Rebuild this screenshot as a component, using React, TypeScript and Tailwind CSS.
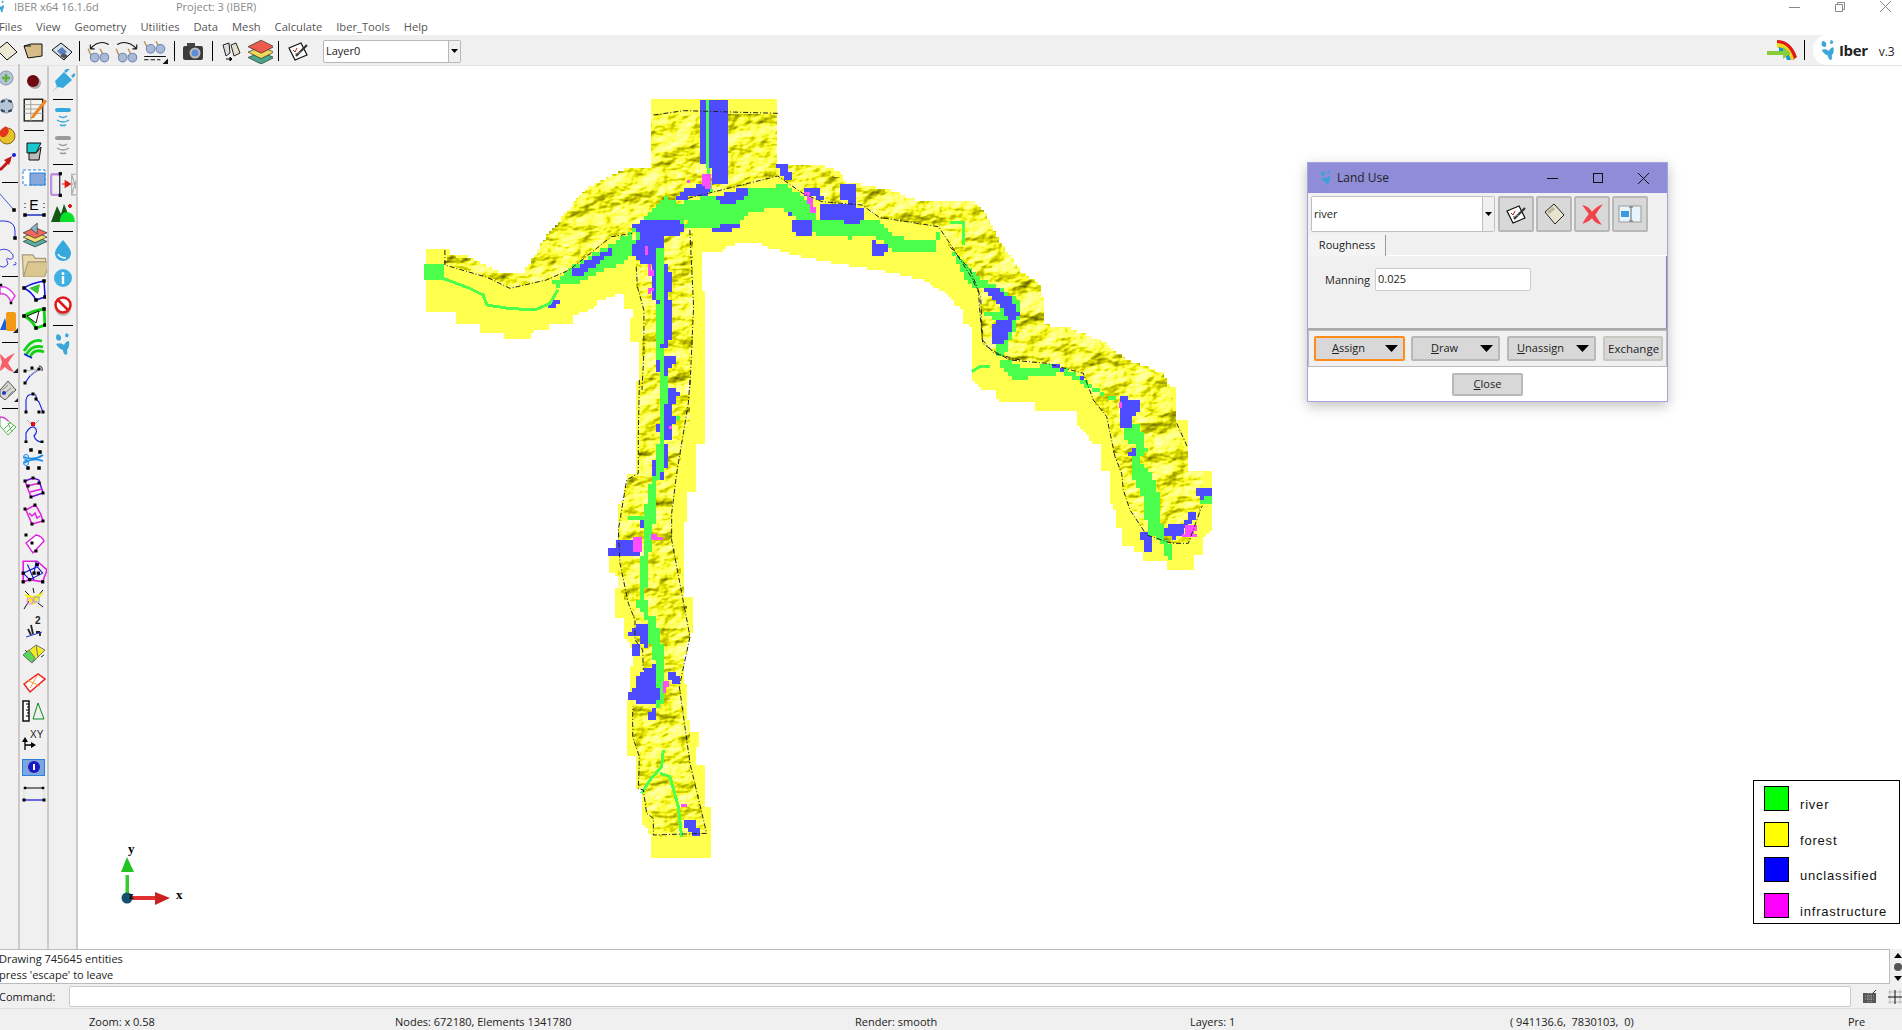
import type { ReactNode } from 'react';

type Pt = number[];

// the zoomed crops I traced from have different scales
const z8 = (p: Pt[]) => p.map(([x, y]) => [420 + x / 2.613, 90 + y / 3]);
const z9 = (p: Pt[]) => p.map(([x, y]) => [600 + x / 3, 380 + y / 3]);
const z10 = (p: Pt[]) => p.map(([x, y]) => [950 + x / 3, 190 + y / 3]);

// turns polygons into blocky raster cells, the map is a raster in the reference
const stairs = (polys: Pt[][], c: number) => {
    let d = '';
    for (const p of polys) {
        const ys = p.map((q) => q[1]);
        const top = Math.floor(Math.min(...ys) / c) * c;
        const bottom = Math.max(...ys);
        for (let y = top; y < bottom; y += c) {
            const yc = y + c / 2;
            const xs: number[] = [];
            p.forEach((a, i) => {
                const b = p[(i + 1) % p.length];
                if (a[1] > yc !== b[1] > yc) {
                    xs.push(a[0] + ((yc - a[1]) / (b[1] - a[1])) * (b[0] - a[0]));
                }
            });
            xs.sort((m, n) => m - n);
            for (let i = 0; i + 1 < xs.length; i += 2) {
                const x0 = Math.round(xs[i] / c) * c;
                const x1 = Math.round(xs[i + 1] / c) * c;
                if (x1 > x0) d += `M${x0} ${y}H${x1}V${y + c}H${x0}Z`;
            }
        }
    }
    return d;
};

const line = (p: Pt[]) => p.map((q) => q.join(',')).join(' ');

const yellow = [
    z8([[15, 475], [78, 475], [78, 495], [130, 500], [205, 545], [270, 548], [330, 440], [430, 300], [540, 232], [605, 232], [605, 30], [935, 30], [935, 222], [1040, 222], [1105, 250], [1105, 272], [1225, 300], [1300, 330], [1445, 335], [1470, 380], [1568, 540], [1568, 900], [1465, 900], [1440, 860], [1440, 710], [1420, 700], [1420, 650], [1360, 600], [1315, 570], [1230, 548], [1095, 522], [990, 498], [900, 470], [885, 460], [800, 465], [790, 490], [735, 490], [735, 525], [745, 665], [745, 900], [570, 900], [570, 760], [545, 755], [555, 660], [530, 660], [530, 610], [470, 630], [450, 655], [400, 680], [400, 705], [335, 705], [335, 720], [290, 725], [290, 750], [220, 750], [220, 725], [160, 725], [160, 700], [95, 700], [95, 670], [15, 670]]),
    z9([[110, 0], [312, 0], [312, 190], [285, 190], [285, 340], [258, 340], [258, 430], [250, 430], [250, 655], [275, 655], [275, 760], [250, 760], [250, 830], [268, 1055], [293, 1055], [293, 1105], [285, 1105], [285, 1155], [312, 1155], [312, 1280], [335, 1280], [335, 1430], [155, 1430], [155, 1375], [130, 1330], [130, 1230], [108, 1225], [110, 1130], [85, 1130], [85, 960], [95, 850], [95, 800], [70, 775], [70, 710], [42, 710], [42, 620], [52, 620], [52, 585], [24, 580], [24, 530], [50, 490], [50, 380], [78, 365], [78, 285], [110, 285]]),
    z10([[0, 35], [70, 35], [70, 60], [100, 60], [140, 140], [205, 240], [235, 260], [270, 285], [285, 360], [285, 405], [350, 412], [460, 455], [530, 510], [590, 530], [640, 550], [660, 590], [680, 590], [680, 690], [710, 690], [710, 840], [790, 845], [790, 1020], [755, 1050], [755, 1095], [730, 1100], [730, 1143], [652, 1143], [652, 1115], [575, 1115], [575, 1090], [548, 1090], [548, 1065], [520, 1065], [520, 1010], [498, 1010], [498, 970], [480, 935], [480, 840], [453, 840], [453, 760], [425, 760], [410, 735], [385, 710], [385, 665], [255, 665], [255, 640], [220, 640], [135, 630], [135, 600], [90, 600], [90, 575], [63, 575], [63, 405], [40, 400], [40, 355], [15, 350], [15, 325], [0, 325]]),
];

const terrain = [
    z8([[68, 495], [130, 505], [205, 548], [270, 550], [330, 440], [430, 300], [540, 232], [605, 232], [605, 70], [935, 70], [935, 222], [1040, 225], [1105, 272], [1225, 305], [1300, 330], [1445, 340], [1568, 545], [1568, 800], [1500, 790], [1470, 750], [1465, 610], [1430, 550], [1380, 460], [1355, 410], [1200, 382], [1155, 345], [1050, 335], [990, 310], [935, 258], [800, 300], [700, 325], [710, 430], [715, 650], [705, 900], [580, 900], [585, 660], [568, 590], [565, 530], [555, 430], [500, 440], [390, 540], [330, 570], [235, 595], [175, 562], [65, 525]]),
    z9([[118, 0], [270, 0], [265, 70], [270, 110], [230, 280], [215, 400], [215, 480], [240, 560], [270, 770], [250, 850], [238, 920], [265, 1050], [270, 1150], [320, 1360], [240, 1370], [160, 1365], [160, 1315], [140, 1300], [130, 1230], [115, 1225], [118, 1130], [98, 1070], [98, 980], [130, 870], [128, 810], [105, 780], [105, 720], [85, 670], [55, 620], [60, 550], [55, 450], [65, 380], [80, 300], [115, 280], [115, 170]]),
    z10([[0, 35], [70, 35], [100, 60], [140, 140], [205, 240], [270, 285], [285, 360], [285, 405], [350, 412], [460, 455], [530, 510], [590, 530], [640, 550], [660, 600], [680, 700], [710, 770], [710, 840], [755, 840], [755, 950], [730, 1010], [715, 1060], [665, 1060], [590, 1035], [575, 1005], [540, 960], [520, 900], [515, 850], [495, 800], [490, 760], [470, 680], [430, 630], [410, 580], [400, 550], [290, 520], [180, 510], [125, 480], [98, 460], [90, 370], [85, 300], [60, 240], [10, 180], [0, 170]]),
];

const green = [
    z8([[700, 330], [850, 300], [870, 295], [960, 285], [1020, 340], [1040, 385], [1110, 390], [1140, 395], [1200, 390], [1235, 440], [1340, 455], [1360, 420], [1345, 490], [1230, 490], [1225, 460], [1180, 440], [1120, 445], [1020, 430], [1000, 400], [965, 375], [940, 350], [850, 375], [830, 405], [750, 410], [705, 420], [680, 340]]),
    z8([[640, 320], [680, 340], [700, 420], [650, 400], [575, 470], [555, 420]]),
    z8([[395, 530], [555, 425], [565, 490], [530, 520], [460, 550], [410, 580], [360, 590], [345, 580]]),
    z8([[15, 525], [60, 525], [65, 565], [15, 565]]),
    z8([[1395, 480], [1420, 510], [1470, 570], [1530, 600], [1568, 640], [1568, 700], [1530, 640], [1470, 600], [1430, 580]]),
    z9([[85, 405], [130, 405], [130, 425], [85, 425]]),
    z9([[50, 430], [70, 430], [70, 438], [50, 438]]),
    z9([[110, 660], [145, 655], [140, 680], [110, 680]]),
    z9([[215, 115], [245, 110], [245, 122], [215, 125]]),
    z10([[10, 190], [60, 240], [130, 290], [180, 330], [200, 400], [160, 500], [140, 490], [130, 460], [170, 410], [150, 390], [95, 375], [150, 360], [140, 320], [90, 290], [50, 270], [25, 230]]),
    z10([[150, 510], [180, 510], [220, 535], [290, 525], [340, 530], [410, 575], [470, 615], [500, 625], [470, 625], [400, 585], [340, 550], [280, 555], [235, 565], [190, 565], [150, 530]]),
    z10([[520, 700], [570, 700], [590, 780], [570, 810], [610, 860], [630, 930], [635, 1000], [640, 1035], [660, 1060], [670, 1110], [650, 1115], [640, 1060], [590, 1030], [585, 930], [540, 850], [545, 810], [555, 770], [520, 740]]),
    z10([[755, 920], [790, 920], [790, 945], [755, 945]]),
];

const blue = [
    z8([[735, 30], [800, 30], [800, 285], [760, 285], [765, 230], [735, 225]]),
    z8([[665, 325], [695, 290], [760, 285], [765, 310], [700, 325]]),
    z8([[800, 305], [860, 292], [855, 320], [815, 345], [770, 330]]),
    z8([[1040, 340], [1165, 350], [1165, 385], [1135, 405], [1090, 390], [1040, 385]]),
    z8([[1095, 280], [1135, 285], [1140, 340], [1095, 330]]),
    z8([[1000, 290], [1040, 300], [1055, 330], [1000, 315]]),
    z8([[930, 225], [960, 225], [975, 270], [950, 268]]),
    z8([[965, 365], [975, 395], [1020, 395], [1020, 440], [990, 440], [970, 410]]),
    z8([[1180, 455], [1225, 460], [1225, 490], [1180, 500]]),
    z8([[755, 410], [830, 405], [840, 415], [770, 430]]),
    z8([[555, 400], [620, 385], [680, 395], [695, 430], [640, 440], [640, 460], [620, 530], [560, 510], [555, 470], [575, 440]]),
    z8([[620, 450], [650, 540], [665, 580], [650, 620], [660, 650], [660, 720], [650, 770], [620, 770], [610, 610], [605, 530]]),
    z8([[395, 540], [470, 490], [505, 470], [500, 490], [465, 520], [415, 560], [395, 560]]),
    z8([[330, 655], [355, 625], [365, 625], [365, 640], [350, 655]]),
    z8([[1465, 590], [1500, 590], [1540, 620], [1568, 680], [1540, 690], [1510, 640]]),
    z8([[1495, 700], [1540, 690], [1520, 760], [1500, 760]]),
    z8([[620, 800], [665, 800], [665, 825], [650, 830], [650, 890], [630, 890], [620, 830]]),
    z9([[190, 20], [240, 35], [225, 60], [215, 100], [225, 120], [210, 175], [195, 175], [165, 150], [190, 110], [185, 70]]),
    z9([[185, 190], [205, 190], [205, 240], [185, 300], [150, 300], [150, 260], [170, 230]]),
    z9([[150, 380], [170, 380], [170, 430], [125, 440], [125, 420], [150, 400]]),
    z9([[55, 480], [125, 475], [120, 525], [60, 530], [25, 530], [25, 505], [50, 503]]),
    z9([[115, 735], [165, 720], [170, 790], [130, 800], [115, 770], [80, 770]]),
    z9([[95, 795], [120, 795], [120, 825], [95, 825]]),
    z9([[115, 880], [185, 845], [190, 940], [180, 970], [85, 965], [90, 930], [110, 925]]),
    z9([[200, 880], [230, 880], [240, 910], [205, 905]]),
    z9([[150, 990], [170, 990], [165, 1015], [145, 1015]]),
    z9([[250, 1315], [285, 1325], [305, 1365], [290, 1370], [250, 1340]]),
    z10([[510, 620], [560, 630], [575, 650], [545, 680], [545, 710], [510, 710], [510, 670]]),
    z10([[140, 315], [170, 335], [190, 365], [185, 410], [165, 450], [140, 455], [130, 430], [135, 395], [170, 390], [175, 350]]),
    z10([[95, 290], [130, 300], [95, 300]]),
    z10([[300, 522], [345, 530], [340, 550]]),
    z10([[380, 550], [415, 575], [385, 565]]),
    z10([[445, 595], [470, 610], [450, 610]]),
    z10([[535, 790], [560, 775], [555, 800], [535, 800]]),
    z10([[735, 895], [788, 895], [788, 920], [750, 925]]),
    z10([[640, 1010], [700, 995], [730, 960], [735, 985], [700, 1030], [665, 1050], [655, 1035], [640, 1035]]),
    z10([[570, 1025], [590, 1030], [610, 1050], [605, 1070], [595, 1090], [575, 1090], [580, 1045], [570, 1045]]),
];

// the river spine sits on top of the blue patches
const spine = [
    z8([[620, 470], [635, 470], [638, 640], [632, 770], [648, 900], [632, 900], [618, 770], [622, 640]]),
    z9([[185, 0], [200, 0], [197, 110], [192, 180], [187, 270], [170, 310], [165, 380], [160, 470], [150, 520], [145, 600], [135, 640], [140, 700], [165, 715], [185, 790], [195, 850], [195, 960], [170, 990], [162, 990], [178, 950], [165, 850], [150, 790], [138, 720], [120, 680], [115, 630], [122, 560], [132, 470], [135, 400], [145, 320], [165, 280], [175, 180], [180, 100]]),
];

const pink = [
    z8([[735, 250], [760, 250], [760, 295], [735, 290]]),
    z8([[695, 270], [705, 270], [705, 278], [695, 278]]),
    z8([[1005, 305], [1020, 310], [1035, 365], [1020, 365]]),
    z8([[585, 470], [595, 470], [595, 495], [585, 495]]),
    z8([[595, 505], [615, 560], [600, 560]]),
    z8([[595, 590], [610, 600], [600, 610]]),
    z9([[100, 475], [130, 465], [125, 515], [100, 515]]),
    z9([[150, 458], [185, 470], [185, 480], [150, 475]]),
    z9([[195, 905], [210, 910], [205, 920], [195, 940], [185, 940], [185, 920]]),
    z9([[240, 1262], [262, 1280], [245, 1285]]),
    z9([[205, 135], [218, 135], [215, 150], [205, 150]]),
    z10([[705, 1005], [745, 1010], [730, 1030], [745, 1045], [700, 1045], [700, 1030]]),
    z10([[510, 635], [520, 635], [520, 655], [510, 650]]),
];

const strands = [
    z8([[60, 565], [130, 595], [165, 615], [175, 645], [230, 655], [300, 660], [340, 640], [360, 600]]),
    z8([[752, 30], [752, 230], [762, 310]]),
    z9([[190, 1110], [185, 1160], [150, 1200], [125, 1240]]),
    z9([[180, 1180], [210, 1190], [235, 1280], [245, 1370]]),
    z10([[0, 98], [40, 98], [40, 165]]),
    z10([[65, 545], [90, 530], [120, 530]]),
];

const bounds = [
    z8([[65, 480], [65, 525], [175, 562], [235, 595], [330, 570], [390, 540], [500, 440], [555, 430]]),
    z8([[610, 75], [690, 62], [935, 70]]),
    z8([[700, 325], [935, 258], [1000, 310], [1050, 335], [1155, 345], [1200, 382], [1355, 410], [1390, 470], [1440, 560], [1465, 620], [1470, 750], [1500, 790], [1568, 810]]),
    z8([[565, 530], [568, 590], [585, 660], [585, 790], [580, 900]]),
    z8([[705, 420], [715, 650], [705, 900]]),
    z9([[270, 0], [265, 70], [230, 280], [215, 400], [215, 480], [270, 770], [238, 920], [270, 1150], [320, 1360], [160, 1365], [160, 1315], [140, 1300], [130, 1230], [115, 1225], [118, 1130], [98, 1070], [98, 980]]),
    z9([[118, 0], [115, 170], [115, 280], [80, 300], [55, 450], [60, 550], [85, 670], [105, 720], [105, 780], [128, 810], [130, 870]]),
    z10([[0, 170], [60, 240], [85, 300], [90, 370], [98, 460], [125, 480], [180, 510], [290, 520], [400, 550], [430, 630], [470, 680], [495, 800], [515, 850], [520, 900], [540, 960], [590, 1035], [665, 1060], [715, 1060], [755, 950]]),
    z10([[680, 700], [712, 770]]),
];

const MapView = () => (
    <svg className="absolute inset-0" width="1824" height="883" viewBox="78 66 1824 883">
        <defs>
            <filter id="hill" filterUnits="userSpaceOnUse" x="400" y="90" width="850" height="790" colorInterpolationFilters="sRGB">
                <feTurbulence type="fractalNoise" baseFrequency="0.03 0.05" numOctaves="4" seed="7" result="n" />
                <feDiffuseLighting in="n" surfaceScale="4.5" diffuseConstant="1" lightingColor="#ffffff" result="l">
                    <feDistantLight azimuth="225" elevation="60" />
                </feDiffuseLighting>
                <feColorMatrix in="l" type="matrix" values="1.5 0 0 0 -0.26 1.5 0 0 0 -0.26 3 0 0 0 -2.3 0 0 0 0 1" result="c" />
                <feComposite in="c" in2="SourceAlpha" operator="in" />
            </filter>
        </defs>
        <g shapeRendering="crispEdges">
            <path d={stairs(yellow, 3)} fill="#ffff4d" />
            <path d={stairs(terrain, 3)} fill="#ffff4d" filter="url(#hill)" />
            <path d={stairs(green, 4)} fill="#4dff4d" />
            <path d={stairs(blue, 4)} fill="#4d4dff" />
            <path d={stairs(spine, 4)} fill="#4dff4d" />
            {strands.map((s, i) => (
                <polyline key={i} points={line(s)} fill="none" stroke="#4dff4d" strokeWidth="3" />
            ))}
            <path d={stairs(pink, 3)} fill="#ff4dff" />
        </g>
        {bounds.map((b, i) => (
            <polyline key={i} points={line(b)} fill="none" stroke="#222" strokeWidth="1" strokeDasharray="5 2 1 2" />
        ))}

        {/* axes */}
        <rect x="125.500" y="875" width="3.500" height="22" fill="#33cc33" />
        <path d="M127 857 L134 872 H121 Z" fill="#22c422" />
        <rect x="130" y="896" width="26" height="4" fill="#e03030" />
        <path d="M155 892 L170 898 L155 905 Z" fill="#c92222" />
        <circle cx="127" cy="898" r="5.500" fill="#15506e" />
        <text x="128" y="853" fontFamily="Liberation Serif" fontWeight="700" fontSize="13" fill="#000">y</text>
        <text x="176" y="899" fontFamily="Liberation Serif" fontWeight="700" fontSize="13" fill="#000">x</text>
        <text x="129" y="899" fontFamily="Liberation Serif" fontWeight="700" fontSize="10" fill="#000">z</text>
    </svg>
);

const I = ({ children, size = 24 }: { children: ReactNode; size?: number }) => (
    <svg width={size} height={size} viewBox="0 0 24 24" className="shrink-0">{children}</svg>
);

const sq = (pts: Pt[], s = 3.500, fill = '#000') =>
    pts.map(([x, y], i) => <rect key={i} x={x - s / 2} y={y - s / 2} width={s} height={s} fill={fill} />);

const Glasses = ({ arc }: { arc?: 'l' | 'r' | 'd' }) => (
    <I size={26}>
        {arc === 'l' && <path d="M4 10 Q12 1 21 6 M4 10 V6 M4 10 H8" fill="none" stroke="#111" strokeWidth="1" />}
        {arc === 'r' && <path d="M3 6 Q12 1 21 10 M21 10 V6 M21 10 H17" fill="none" stroke="#111" strokeWidth="1" />}
        <path d={arc === 'd' ? 'M2 3 L5 9 M13 3 L16 9' : 'M2 10 L5 17 M13 10 L16 16'} fill="none" stroke="#b98a46" strokeWidth="1.200" />
        <circle cx="8" cy={arc === 'd' ? 10 : 18} r="4" fill="#a9b9d8" stroke="#7488b0" />
        <circle cx="17" cy={arc === 'd' ? 10 : 18} r="4" fill="#a9b9d8" stroke="#7488b0" />
        {arc === 'd' && <path d="M2 17 H22 M2 20 H6 M8 20 H12 M14 20 H17" stroke="#111" strokeWidth="1" />}
        {arc === 'd' && <path d="M24 19 V24 H19 Z" fill="#111" />}
    </I>
);

const Check = ({ size = 24 }: { size?: number }) => (
    <I size={size}>
        <path d="M3 9 L15 4 L21 16 L9 21 Z" fill="#fff" stroke="#111" strokeWidth="1.200" />
        <path d="M7 11 L9 13 L11 9" fill="none" stroke="#b02020" strokeWidth="1" />
        <path d="M10 17 L21 6" stroke="#333" strokeWidth="2.200" />
        <path d="M9 15 L15 13" stroke="#888" strokeWidth="1" />
    </I>
);

const Page = () => (
    <I>
        <path d="M3 10 L12 2 L22 13 L13 22 Z" fill="#e8e4d0" stroke="#222" strokeWidth="1" />
        <path d="M6 11 L12 6" stroke="#bdb89e" strokeWidth="3" />
    </I>
);

const RedX = ({ size = 24 }: { size?: number }) => (
    <I size={size}>
        <path d="M3 4 Q8 4 12 10 Q16 5 22 3 Q18 8 15 13 Q18 18 21 22 Q15 21 12 16 Q8 20 3 21 Q6 16 9 12 Q6 8 3 4 Z" fill="#f2424a" />
    </I>
);

const Wave = ({ color }: { color: string }) => (
    <I>
        <path d="M4 5 Q4 3 7 3 H17 Q20 3 20 5 Q20 7 17 7 H7 Q4 7 4 5 Z" fill={color} />
        <path d="M8 11 Q12 14 16 11 M6 15 Q12 19 18 15 M9 20 Q12 21 15 20" fill="none" stroke={color} strokeWidth="1.500" />
    </I>
);

const Logo = ({ color = '#3ba7d8', size = 24 }: { color?: string; size?: number }) => (
    <I size={size}>
        <path d="M6 2 Q11 3 10 7 Q9 10 6 8 Q4 6 6 2 Z M15 1 Q19 2 17 5 Q15 6 14 4 Z M5 12 Q10 10 13 13 Q15 9 18 9 Q19 15 16 18 Q17 22 15 23 Q12 22 12 18 Q8 17 5 12 Z" fill={color} />
    </I>
);

// this column is cut by the window edge, its icons start left of the page
const col1: ReactNode[] = [
    <I><circle cx="6" cy="12" r="7" fill="#b5c5d8" stroke="#8797ad" /><path d="M6 8 V16 M2 12 H10" stroke="#5fae3f" strokeWidth="2.500" /></I>,
    <I><circle cx="6" cy="12" r="7" fill="#b5c5d8" stroke="#8797ad" /><path d="M2 9 V7 H5 M8 7 H11 V9 M11 15 V17 H8 M5 17 H2 V15" fill="none" stroke="#234" strokeWidth="1.300" /></I>,
    <I><circle cx="7" cy="14" r="8" fill="#e6c22c" stroke="#8a6a12" /><path d="M0 9 Q5 3 7 5 Q11 9 6 14 Q2 17 0 13 Z" fill="#e5341c" /></I>,
    <I><path d="M0 20 L10 10" stroke="#c01818" strokeWidth="3" /><path d="M12 6 L4 10 L9 15 Z" fill="#c01818" /><circle cx="14" cy="5" r="2" fill="#1520d8" /></I>,
    'sep12',
    <I><path d="M0 4 L14 20" stroke="#4060d8" strokeWidth="1" />{sq([[14, 20]])}</I>,
    <I><path d="M0 3 H5 Q15 4 15 13 V20" fill="none" stroke="#2030e0" strokeWidth="1" />{sq([[15, 20]])}</I>,
    <I><path d="M0 4 Q8 1 13 9 Q14 14 9 13 Q5 10 8 18 Q4 23 0 20 M15 16 Q18 19 13 19" fill="none" stroke="#4040e8" strokeWidth="1" /></I>,
    'sep8',
    <I><path d="M0 5 Q8 3 15 14 L11 20 Q7 10 0 12 Z" fill="#fff" stroke="#e040e0" strokeWidth="1.500" />{sq([[1, 3], [11, 21]], 2.500)}</I>,
    <I><path d="M0 20 L5 8 L8 20 Z" fill="#1b5de0" /><rect x="6" y="2" width="10" height="19" rx="2" fill="#f59a14" /><path d="M18 18 V23 H13 Z" fill="#222" /></I>,
    'sep12',
    <I><path d="M0 4 Q2 5 5 9 Q10 5 15 3 Q11 8 8 13 Q11 18 14 22 Q8 21 5 17 Q2 20 0 21 Q0 16 2 12 Q0 8 0 4 Z" fill="#f5606a" /><path d="M18 18 V23 H13 Z" fill="#222" /></I>,
    <I><path d="M0 12 L8 3 L16 12 L5 22 L0 18 Z" fill="#d8d8d0" stroke="#555" /><path d="M2 12 L8 7 M5 15 L11 10 M8 18 L13 13" stroke="#888" /><circle cx="4" cy="15" r="2" fill="#1a40c0" /><path d="M19 19 V24 H14 Z" fill="#222" /></I>,
    'sep8',
    <I><path d="M0 4 Q4 2 8 7 L16 13 L8 21 Q2 14 0 12 Z" fill="#fff" stroke="#52b552" strokeWidth="1" /><path d="M0 3 Q5 3 8 7" fill="none" stroke="#e040e0" strokeWidth="1.500" /><path d="M4 15 L11 8 M7 18 L14 11 M8 9 L12 18" stroke="#52b552" strokeWidth="1" /></I>,
];

const poly = (inner: string, outer = '#1010e0') => (
    <I>
        <path d="M2 9 Q10 4 22 2 L23 18 L14 21 Q10 13 2 9 Z" fill="#fff" stroke={outer} strokeWidth="1.500" />
        <path d="M7 9 L18 5 L16 15 Z" fill={inner} />
        {sq([[2, 9], [22, 2], [23, 18], [14, 21]])}
    </I>
);

const col2: ReactNode[] = [
    <I><circle cx="13" cy="14" r="6" fill="#aaa" /><circle cx="11" cy="12" r="6" fill="#6e0a14" /></I>,
    <I size={26}><rect x="3" y="3" width="17" height="20" fill="#f4f4ec" stroke="#222" strokeWidth="1.300" /><path d="M3 8 H20 M3 12 H20 M3 16 H20 M9 3 V23" stroke="#999" strokeWidth=".8" /><path d="M10 18 L22 3 L24 5 L12 20 L9 21 Z" fill="#e8882a" /></I>,
    'sep14',
    <I><path d="M5 4 H19 L14 14 H5 Z" fill="#18c8d0" stroke="#111" /><path d="M7 14 V21 H17 L19 8 L14 14 Z" fill="#bbb" stroke="#111" /></I>,
    <I><rect x="1" y="3" width="22" height="15" fill="#fff" stroke="#2a80e0" strokeDasharray="3 2" /><rect x="8" y="6" width="15" height="12" fill="#88a8dc" stroke="#2a80e0" /></I>,
    <I><path d="M3 20 H22" stroke="#1020c0" strokeWidth="1.400" />{sq([[3, 20], [22, 20]])}<path d="M3 8 V14 M22 8 V14" stroke="#000" strokeDasharray="1 3" /><text x="12" y="15" textAnchor="middle" fontSize="14" fontFamily="Liberation Sans" fill="#000">E</text></I>,
    <I size={26}><path d="M2 18 L13 13 L24 18 L13 23 Z" fill="#5aaea0" stroke="#222" strokeWidth=".6" /><path d="M2 14 L13 9 L24 14 L13 19 Z" fill="#efe070" stroke="#222" strokeWidth=".6" /><path d="M2 10 L13 5 L24 10 L13 15 Z" fill="#f0685c" stroke="#222" strokeWidth=".6" /><path d="M15 11 V1 L9 6 Z" fill="#8ab4c8" stroke="#333" strokeWidth=".6" /></I>,
    <I size={28}><path d="M3 24 L2 5 H11 L13 8 H22 V12 H8 Z" fill="#e9d8a8" stroke="#a89a7a" /><path d="M3 24 L7 11 H26 L21 24 Z" fill="#dcc690" stroke="#a89a7a" /></I>,
    poly('#3cc43c'),
    <I><path d="M2 9 Q10 4 22 2 L23 18 L14 21 Q10 13 2 9 Z" fill="#fff" stroke="#12d012" strokeWidth="2.800" /><path d="M5 9 L17 4 L14 16 Z" fill="#fff" stroke="#111" />{sq([[2, 9], [22, 2], [23, 18], [14, 21]])}</I>,
    <I><path d="M2 16 Q10 3 20 6 M4 20 Q10 9 21 12 M8 22 Q12 13 22 17" fill="none" stroke="#12d012" strokeWidth="2.800" /><path d="M2 19 Q8 22 10 23" fill="none" stroke="#1020e0" strokeWidth="1.500" /></I>,
    <I><path d="M3 20 L8 13 L17 6" fill="none" stroke="#1020e0" strokeWidth="1.200" /><path d="M3 8 L17 6 L8 13" fill="none" stroke="#bbb" />{sq([[3, 20], [3, 8], [17, 6], [10, 5]], 3)}<path d="M17 3 Q21 3 20 8" fill="none" stroke="#111" /></I>,
    <I><path d="M4 21 V9 Q5 3 11 3 Q15 3 14 8 L17 11 L21 21" fill="none" stroke="#1020e0" strokeWidth="1.100" />{sq([[4, 21], [11, 3], [14, 8], [21, 21], [17, 21]], 3)}</I>,
    <I><path d="M4 23 V14 Q8 7 12 8 Q17 12 12 17 Q14 23 20 23" fill="none" stroke="#1020e0" strokeWidth="1.100" />{sq([[4, 23], [20, 23]], 3)}<rect x="9" y="3" width="4" height="4" fill="#e01010" /><path d="M5 1 L9 5 M17 1 L13 5" stroke="#aaa" /></I>,
    <I><path d="M2 10 Q12 14 21 8 M2 16 Q12 10 21 14" fill="none" stroke="#1a8ce8" strokeWidth="1.600" /><circle cx="4" cy="10" r="2.500" fill="none" stroke="#1a8ce8" /><circle cx="4" cy="16" r="2.500" fill="none" stroke="#1a8ce8" />{sq([[9, 3], [18, 5], [6, 21], [17, 21]])}</I>,
    <I><path d="M3 6 L11 3 L17 5 L21 18 L9 22 L6 14 Z" fill="none" stroke="#e020e0" strokeWidth="1.500" /><path d="M3 6 L11 3 L17 5 L21 18 L9 22" fill="none" stroke="#1010e0" strokeWidth=".8" /><path d="M5 11 L18 8 M8 17 L20 14" stroke="#e020e0" strokeWidth="1.500" />{sq([[3, 6], [11, 3], [17, 8], [21, 18], [9, 22], [6, 11]], 3)}</I>,
    <I><path d="M4 7 L13 2 Q19 9 21 18 L10 21 Z" fill="none" stroke="#e020e0" strokeWidth="1.500" /><path d="M7 10 L10 13 L13 10 L15 15 L18 13" fill="none" stroke="#e020e0" strokeWidth="1.500" />{sq([[3, 6], [13, 2], [21, 18], [10, 21]], 3)}</I>,
    <I><path d="M4 12 L14 4 Q20 5 22 10 L11 22 Z" fill="#fff" stroke="#e020e0" strokeWidth="1.400" />{sq([[4, 4], [10, 12], [14, 20]], 3)}</I>,
    <I size={26}><path d="M2 3 L15 3 L24 11 L20 22 L8 20 L2 22 Z" fill="none" stroke="#e020e0" strokeWidth="1.500" /><path d="M2 14 L15 8 L20 14 L8 20 Z M6 6 L12 20 M14 3 L12 14" fill="none" stroke="#1010d0" strokeWidth="1" />{sq([[2, 22], [12, 14], [15, 6], [20, 22], [8, 20], [16, 14], [2, 14]], 3)}</I>,
    <I><path d="M3 4 L8 9 M21 3 L16 9 M2 22 L7 14 M21 20 L16 16 M11 1 L12 6" stroke="#111" /><path d="M2 7 L12 9 L22 5 L17 12 L12 18 L7 14 Z" fill="#f6f01e" /><circle cx="8" cy="14" r="3" fill="none" stroke="#f08ae0" strokeWidth="1.200" /><rect x="12" y="10" width="5" height="5" fill="none" stroke="#9a9ae0" /></I>,
    <I><path d="M6 14 L9 20 M9 10 L11 19 M18 17 V21 M14 17 L18 17" stroke="#222" strokeWidth="1.800" /><path d="M4 22 L20 17" stroke="#2030d0" /><text x="13" y="9" fontSize="10" fontWeight="700" fontFamily="Liberation Sans" fill="#222">2</text></I>,
    <I><path d="M1 12 L14 2 L23 7 L10 20 Z" fill="#f4ec20" stroke="#777" /><path d="M1 12 L7 7 L13 15 L10 20 Z" fill="#58d858" stroke="#777" /><path d="M14 2 L16 14" stroke="#777" /><path d="M3 7 L5 9 M22 12 L19 14" stroke="#333" /></I>,
    <I><path d="M2 13 L16 3 L23 8 L8 21 Z" fill="#fff" stroke="#f02020" strokeWidth="1.500" /><path d="M5 9 L18 15 M15 5 L8 17" stroke="#f0a030" strokeWidth="1" /></I>,
    <I><rect x="1" y="2" width="6" height="20" fill="#fff" stroke="#000" strokeWidth="1.400" /><path d="M4 5 H7 M5 8 H7 M4 11 H7 M5 14 H7 M4 17 H7" stroke="#000" /><path d="M16 4 L11 20 H22 Z" fill="none" stroke="#0a8a1a" strokeWidth="1" /></I>,
    <I><path d="M3 23 V13 M3 18 H11" stroke="#000" strokeWidth="1.300" /><path d="M3 10 L0 15 H6 Z M14 18 L9 15 V21 Z" fill="#000" /><text x="8" y="11" fontSize="10" fontFamily="Liberation Sans" fill="#222">XY</text></I>,
    <div className="w-[23px] h-[17px] bg-[#7da6e0] border border-[#2a80e0] flex items-center justify-center"><div className="w-[12px] h-[12px] rounded-full bg-[#1a1ac0] flex items-center justify-center"><div className="w-[2px] h-[6px] bg-white" /></div></div>,
    <I><path d="M3 5 H21" stroke="#000" />{sq([[3, 5], [21, 5]], 2.500)}<path d="M2 6 V16 M22 6 V16" stroke="#a0e0a0" strokeDasharray="1 1" /><path d="M2 17 H22" stroke="#1010e0" strokeWidth="1.200" />{sq([[2, 17], [22, 17]], 3)}</I>,
];

const col3: ReactNode[] = [
    <I><path d="M1 23 L6 18 L4 12 L13 3 L21 11 L12 19 L7 18" fill="#35a8de" /><path d="M14 3 L18 -1 M21 8 L24 5" stroke="#35a8de" strokeWidth="2.500" /></I>,
    'sep8',
    <Wave color="#35a8de" />,
    <Wave color="#9a9a9a" />,
    'sep11',
    <I size={26}><path d="M1 3 H10 M1 22 H10 M1 3 V22" fill="none" stroke="#c090e0" strokeWidth="2.200" /><path d="M9 3 V22" stroke="#111" /><rect x="8" y="1" width="3" height="3" fill="#000" /><rect x="8" y="21" width="3" height="3" fill="#000" /><path d="M11 12 H14 M14 9 L19 12 L14 15 Z" fill="#e01818" stroke="#e01818" /><path d="M20 3 H26 V22 H20 Z M20 3 L26 22 M26 3 L20 22 M20 12 H26" fill="none" stroke="#aaa" /></I>,
    <I><path d="M0 22 L6 6 L10 14 L13 4 L18 16 L18 22 Z" fill="#165a16" /><path d="M9 22 Q9 12 16 12 Q23 12 24 22 Z" fill="#0ae02a" /><path d="M19 4 V8 M17 6 H21" stroke="#e01818" strokeWidth="2" /></I>,
    'sep10',
    <I><path d="M12 2 Q20 11 20 15 A8 8 0 0 1 4 15 Q4 11 12 2 Z" fill="#35a8de" /><path d="M7 16 Q9 20 15 20" fill="none" stroke="#fff" strokeWidth="1.500" /></I>,
    <I><circle cx="12" cy="12" r="9" fill="#3fb0e2" /><circle cx="12" cy="7.500" r="1.500" fill="#fff" /><rect x="10.800" y="10" width="2.400" height="8" fill="#fff" /></I>,
    <I><circle cx="12" cy="14" r="8" fill="#bbb" /><circle cx="12" cy="11" r="7.500" fill="#fff" stroke="#e01818" strokeWidth="2.500" /><path d="M7 6 L17 16" stroke="#e01818" strokeWidth="2.500" /></I>,
    'sep10',
    <Logo />,
];

const sepClass: Record<string, string> = {
    sep8: 'h-[8px]',
    sep10: 'h-[10px]',
    sep11: 'h-[11px]',
    sep12: 'h-[12px]',
    sep14: 'h-[14px]',
};

const ToolColumn = ({ items, className }: { items: ReactNode[]; className: string }) => (
    <div className={`flex flex-col items-center overflow-hidden border-r-2 border-[#cfc8c8] ${className}`}>
        {items.map((item, i) =>
            typeof item === 'string' ? (
                <div key={i} className={`w-[20px] shrink-0 flex items-center ${sepClass[item]}`}>
                    <div className="w-full h-px bg-black" />
                </div>
            ) : (
                <div key={i} className="h-[28px] w-[28px] shrink-0 flex items-center justify-center">
                    {item}
                </div>
            ),
        )}
    </div>
);

const VSep = ({ className }: { className: string }) => <div className={`w-px h-[20px] bg-black shrink-0 ${className}`} />;

const Toolbar = () => (
    <div className="h-[31px] bg-[#f0f0f0] flex items-center shrink-0 border-b border-[#e4e4e4]">
        <div className="flex items-center pl-0 -ml-[5px] translate-y-px">
            <I><path d="M2 11 L12 3 L22 13 L12 21 Z" fill="#ece8d4" stroke="#111" /></I>
            <div className="ml-[2px]"><I><path d="M3 7 L10 5 L21 5 L21 17 L7 19 Z" fill="#d8bc88" stroke="#111" /><path d="M3 7 L10 7" stroke="#111" /></I></div>
            <div className="ml-[5px]"><I><path d="M2 11 L11 4 L22 13 L14 21 Z" fill="#d8e0ec" stroke="#111" /><path d="M7 12 L12 8 L17 13 L12 17 Z" fill="#5a80c0" /><path d="M10 17 L14 14 L18 17 L15 20 Z" fill="#555" /></I></div>
            <VSep className="ml-[5px]" />
            <div className="ml-[6px]"><Glasses arc="l" /></div>
            <div className="ml-[2px]"><Glasses arc="r" /></div>
            <div className="ml-[2px]"><Glasses arc="d" /></div>
            <VSep className="ml-[6px]" />
            <div className="ml-[6px]"><I><rect x="2" y="7" width="20" height="14" rx="2" fill="#3c3c3c" /><rect x="6" y="4" width="8" height="4" fill="#444" /><circle cx="14" cy="14" r="5.500" fill="#bbb" /><circle cx="14" cy="14" r="3.500" fill="#5a90d8" /></I></div>
            <VSep className="ml-[7px]" />
            <div className="ml-[6px]"><I><path d="M4 6 L10 4 L11 14 L7 17 Z" fill="#ddd" stroke="#222" /><path d="M12 6 L17 4 L21 14 L15 17 Z" fill="#e4e0cc" stroke="#222" /><path d="M7 20 H11 M11 18 L13 20 L11 22 Z" fill="#000" stroke="#000" /></I></div>
            <div className="ml-[4px]"><I size={26}><path d="M1 18 L13 13 L25 18 L13 24 Z" fill="#4aa88a" stroke="#222" strokeWidth=".6" /><path d="M1 13 L13 8 L25 13 L13 19 Z" fill="#f0d858" stroke="#222" strokeWidth=".6" /><path d="M1 8 L13 2 L25 8 L13 14 Z" fill="#ee5a4c" stroke="#222" strokeWidth=".6" /></I></div>
            <VSep className="ml-[5px]" />
            <div className="ml-[7px]"><Check /></div>
        </div>
        <div className="ml-[13px] w-[138px] h-[23px] bg-white border border-[#b8b8b8] rounded-[2px] flex items-center translate-y-px">
            <span className="flex-1 pl-[2px]">Layer0</span>
            <div className="w-[12px] h-full bg-[#f0f0f0] border-l border-[#b8b8b8] flex items-center justify-center">
                <svg width="7" height="4" viewBox="0 0 7 4"><path d="M0 0 H7 L3.500 4 Z" fill="#000" /></svg>
            </div>
        </div>
        <div className="ml-auto flex items-center h-full">
            <svg width="32" height="22" viewBox="0 0 32 22">
                <path d="M10 1 Q24 1 30 18 L26 21 Q22 7 10 7 Z" fill="#e01818" />
                <path d="M10 4 Q22 4 27 20 L24 21 Q20 9 10 9 Z" fill="#f0d818" />
                <path d="M12 8 Q20 9 24 21 L20 21 Q18 13 12 12 Z" fill="#1890e0" />
                <path d="M0 12 H16 V8 L24 14 L16 20 V16 H0 Z" fill="#88cc38" />
            </svg>
            <div className="w-px h-[20px] bg-black ml-[5px]" />
            <div className="ml-[8px] w-[89px] h-full bg-white rounded-l-[14px] flex items-center pl-[4px]">
                <Logo size={22} />
                <span className="pt-[1px] text-[15px] font-bold tracking-tight font-['Open_Sans'] text-[#222]">Iber</span>
                <span className="ml-[11px] pt-[3px] text-[12px] text-[#222]">v.3</span>
            </div>
        </div>
    </div>
);

const DlgIcon = ({ children }: { children: ReactNode }) => (
    <div className="w-[36px] h-[36px] bg-[#d8d8d8] border-2 border-[#b8b8b8] rounded-[2px] flex items-center justify-center">{children}</div>
);

const Arrow = () => (
    <svg width="13" height="7" viewBox="0 0 13 7"><path d="M0 0 H13 L6.500 7 Z" fill="#000" /></svg>
);

const ArrowButton = ({ u, rest, className }: { u: string; rest: string; className: string }) => (
    <div className={`h-[25px] bg-[#d8d8d8] rounded-[2px] flex items-center pr-[5px] ${className}`}>
        <span className="flex-1 text-center pr-[4px]"><u>{u}</u>{rest}</span>
        <Arrow />
    </div>
);

const LandUse = () => (
    <div className="absolute left-[1229px] top-[96px] w-[361px] h-[240px] border border-[#a5a3dc] bg-white shadow-[0_4px_12px_rgba(0,0,0,0.25)] flex flex-col">
        <div className="h-[30px] bg-[#8f8dd8] flex items-center pl-[10px]">
            <Logo color="#3a9fd8" size={16} />
            <span className="ml-[3px] text-[12px] text-[#222]">Land Use</span>
            <div className="ml-auto flex items-center">
                <svg width="11" height="11" viewBox="0 0 11 11"><path d="M0 5.500 H11" stroke="#111" /></svg>
                <svg className="ml-[35px]" width="10" height="10" viewBox="0 0 10 10"><rect x=".5" y=".5" width="9" height="9" fill="none" stroke="#111" /></svg>
                <svg className="ml-[35px] mr-[18px]" width="11" height="11" viewBox="0 0 11 11"><path d="M0 0 L11 11 M11 0 L0 11" stroke="#111" /></svg>
            </div>
        </div>
        <div className="bg-[#f0f0f0] flex items-center gap-[2px] pt-[3px] pl-[3px]">
            <div className="w-[184px] h-[36px] bg-white border border-[#c0c0c0] rounded-[2px] flex items-center mr-[1px]">
                <span className="flex-1 pl-[2px]">river</span>
                <div className="w-[12px] h-full bg-[#f0f0f0] border-l border-[#c0c0c0] flex items-center justify-center">
                    <svg width="7" height="4" viewBox="0 0 7 4"><path d="M0 0 H7 L3.500 4 Z" fill="#000" /></svg>
                </div>
            </div>
            <DlgIcon><Check /></DlgIcon>
            <DlgIcon><Page /></DlgIcon>
            <DlgIcon><RedX size={26} /></DlgIcon>
            <DlgIcon>
                <svg width="24" height="20" viewBox="0 0 24 20"><rect x="1" y="2" width="22" height="16" fill="#e8f4fc" stroke="#999" /><rect x="3" y="7" width="8" height="6" fill="#3c9ae0" /><path d="M13 3 V17 M11 3 H15 M11 17 H15" stroke="#666" /></svg>
            </DlgIcon>
        </div>
        <div className="bg-[#f0f0f0] pt-[3px] pl-[1px] h-[24px] border-b border-[#ffffff] flex">
            <div className="w-[77px] h-[21px] bg-[#f4f4f4] border-r border-[#999] flex items-center justify-center">Roughness</div>
        </div>
        <div className="h-[74px] bg-[#f0f0f0] border-r border-[#8888a8] border-b-2 border-b-[#aaaaaa] flex items-start pt-[12px] pl-[17px]">
            <span className="h-[23px] leading-[23px]">Manning</span>
            <div className="ml-[5px] w-[156px] h-[23px] bg-white border border-[#cccccc] rounded-[2px] flex items-center pl-[2px]">0.025</div>
        </div>
        <div className="h-[37px] bg-[#f0f0f0] border border-[#bbbbbb] flex items-center pl-[5px]">
            <ArrowButton u="A" rest="ssign" className="w-[91px] border-2 border-[#ff8c1a]" />
            <ArrowButton u="D" rest="raw" className="ml-[6px] w-[89px] border-2 border-[#b8b8b8]" />
            <ArrowButton u="U" rest="nassign" className="ml-[7px] w-[89px] border-2 border-[#b8b8b8]" />
            <div className="ml-[7px] w-[60px] h-[25px] bg-[#d8d8d8] border-2 border-[#c8c8c0] rounded-[2px] flex items-center overflow-hidden pl-[3px] whitespace-nowrap text-[11.500px]">Exchange</div>
        </div>
        <div className="flex-1 flex items-center justify-center">
            <div className="w-[71px] h-[23px] bg-[#d8d8d8] border-2 border-[#b8b8b8] rounded-[2px] flex items-center justify-center"><span><u>C</u>lose</span></div>
        </div>
    </div>
);

const legend = [
    { name: 'river', color: 'bg-[#00ff00]' },
    { name: 'forest', color: 'bg-[#ffff00]' },
    { name: 'unclassified', color: 'bg-[#0000ff]' },
    { name: 'infrastructure', color: 'bg-[#ff00ff]' },
];

const Legend = () => (
    <div className="absolute right-[2px] bottom-[25px] w-[147px] h-[144px] bg-white border border-black flex flex-col pt-[5px] pl-[10px] gap-[10.500px]">
        {legend.map((l) => (
            <div key={l.name} className="flex h-[25px]">
                <div className={`w-[25px] h-[25px] border border-black ${l.color}`} />
                <span className="ml-[11px] pt-[10px] text-[13px] leading-[18px] tracking-[0.8px] font-['Liberation_Sans'] text-[#111]">{l.name}</span>
            </div>
        ))}
    </div>
);

const App = () => (
    <div className="w-[1902px] h-[1030px] overflow-hidden bg-white flex flex-col font-['Open_Sans',sans-serif] text-[11px] text-[#222]">
        {/* title bar */}
        <div className="h-[13px] flex items-center shrink-0 text-[11px] leading-[13px] text-[#888]">
            <div className="-ml-[6px]"><Logo size={13} /></div>
            <span className="ml-[7px] w-[162px]">IBER x64 16.1.6d</span>
            <span>Project: 3 (IBER)</span>
            <div className="ml-auto flex items-center">
                <svg width="11" height="6" viewBox="0 0 11 6"><path d="M0 3.500 H11" stroke="#888" /></svg>
                <svg className="ml-[35px]" width="10" height="10" viewBox="0 0 10 10"><path d="M2.500 2.500 V.5 H9.500 V7.500 H7.500 M.5 2.500 H7.500 V9.500 H.5 Z" fill="none" stroke="#888" /></svg>
                <svg className="ml-[35px] mr-[11px]" width="11" height="11" viewBox="0 0 11 11"><path d="M0 0 L11 11 M11 0 L0 11" stroke="#888" /></svg>
            </div>
        </div>

        {/* menu */}
        <div className="h-[22px] flex items-center gap-[14px] pt-[6px] -ml-[1px] shrink-0 text-[11.200px] text-[#555]">
            {['Files', 'View', 'Geometry', 'Utilities', 'Data', 'Mesh', 'Calculate', 'Iber_Tools', 'Help'].map((m) => (
                <span key={m}>{m}</span>
            ))}
        </div>

        <Toolbar />

        <div className="flex-1 flex min-h-0">
            <div className="w-[78px] h-full bg-[#f0f0f0] flex shrink-0">
                <ToolColumn items={col1} className="w-[20px] -mt-[2px] [&>div]:translate-x-[3px]" />
                <ToolColumn items={col2} className="w-[29px] pt-[1px]" />
                <ToolColumn items={col3} className="w-[29px] pt-[1px]" />
            </div>
            <div className="flex-1 relative bg-white overflow-hidden">
                <MapView />
                <LandUse />
                <Legend />
            </div>
        </div>

        {/* messages and command line */}
        <div className="h-[36px] bg-[#f0f0f0] flex shrink-0">
            <div className="w-[1892px] h-[35px] bg-white border border-[#bbbbbb] -ml-[2px] leading-[16px] pt-px text-[#222]">
                <div>Drawing 745645 entities</div>
                <div>press 'escape' to leave</div>
            </div>
            <div className="flex-1 flex flex-col items-center justify-between py-[4px] pl-[3px]">
                <svg width="8" height="5" viewBox="0 0 8 5"><path d="M4 0 L8 5 H0 Z" fill="#000" /></svg>
                <div className="w-[8px] h-[8px] rounded-full bg-[#555]" />
                <svg width="8" height="5" viewBox="0 0 8 5"><path d="M0 0 H8 L4 5 Z" fill="#000" /></svg>
            </div>
        </div>
        <div className="h-[24px] bg-[#f0f0f0] flex items-center shrink-0 border-b border-[#dddddd]">
            <span className="-ml-[1px] w-[70px] pt-[2px]">Command:</span>
            <div className="w-[1783px] h-[21px] bg-white border border-[#cccccc] rounded-[2px]" />
            <svg className="ml-[12px]" width="14" height="14" viewBox="0 0 14 14"><rect x="0" y="3" width="13" height="10" fill="#555" /><path d="M2 6 H11 M2 9 H11 M5 3 V13 M8 3 V13" stroke="#aaa" strokeDasharray="1 1" /><path d="M10 3 L13 0" stroke="#333" /></svg>
            <svg className="ml-[11px]" width="14" height="14" viewBox="0 0 14 14"><path d="M0 2 H14 M0 7 H14 M0 12 H14 M2 0 V14 M7 0 V14 M12 0 V14" stroke="#bbb" /><path d="M0 7 H14 M7 0 V14" stroke="#222" /></svg>
        </div>
        <div className="h-[21px] bg-[#f0f0f0] flex items-center pt-[6px] shrink-0">
            <span className="ml-[89px] w-[306px]">Zoom: x 0.58</span>
            <span className="w-[460px]">Nodes: 672180, Elements 1341780</span>
            <span className="w-[335px]">Render: smooth</span>
            <span className="w-[320px]">Layers: 1</span>
            <span className="w-[338px]">( 941136.6, &nbsp;7830103, &nbsp;0)</span>
            <span>Pre</span>
        </div>
    </div>
);

export default App;
